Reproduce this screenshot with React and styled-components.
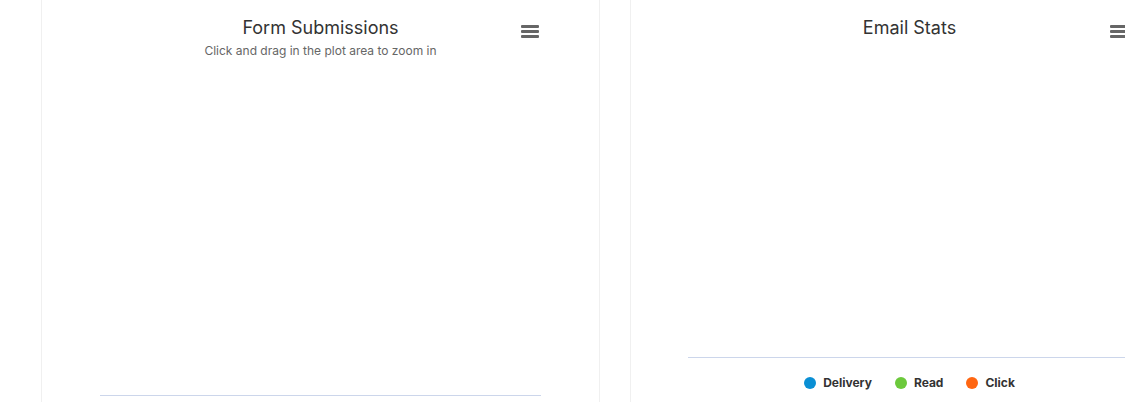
import styled, { createGlobalStyle } from "styled-components";

const GlobalStyle = createGlobalStyle`
  html, body {
    margin: 0;
    padding: 0;
    background: #ffffff;
    font-family: Inter, "Noto Sans", sans-serif;
    overflow: hidden;
  }
`;

const Page = styled.div`
  display: flex;
  gap: 30px;
  padding-left: 41px;
  height: 402px;
  overflow: hidden;
`;

const Card = styled.section`
  position: relative;
  flex: 0 0 559px;
  box-sizing: border-box;
  border-left: 1px solid #f0f0f0;
  border-right: 1px solid #f0f0f0;
  height: 440px;
  display: flex;
  flex-direction: column;
  align-items: center;
`;

const Title = styled.h2`
  margin: 16px 0 0;
  font-size: 18px;
  line-height: 24px;
  font-weight: 400;
  color: #333333;
`;

const Subtitle = styled.p`
  margin: 3px 0 0;
  font-size: 12px;
  line-height: 16px;
  color: #666666;
`;

const Plot = styled.div`
  align-self: stretch;
  margin: 0 ${({ $inset }) => $inset}px;
  height: ${({ $height }) => $height}px;
  border-bottom: 1px solid #ccd6eb;
`;

const MenuButton = styled.button`
  position: absolute;
  top: 25px;
  left: 479px;
  padding: 0;
  border: 0;
  background: none;
  cursor: pointer;
  display: flex;
`;

const Legend = styled.ul`
  list-style: none;
  margin: 17px 0 0;
  padding: 0;
  display: flex;
  gap: 23px;
`;

const LegendItem = styled.li`
  display: flex;
  align-items: center;
  gap: 7px;
  font-size: 12px;
  line-height: 16px;
  font-weight: 700;
  color: #333333;
`;

const Dot = styled.span`
  width: 12px;
  height: 12px;
  border-radius: 50%;
  background: ${({ $color }) => $color};
`;

function Hamburger() {
  return (
    <MenuButton aria-label="Chart menu">
      <svg width="18" height="14" viewBox="0 0 18 14">
        <g fill="#666666">
          <rect x="0" y="0" width="18" height="3" rx="1" />
          <rect x="0" y="5" width="18" height="3" rx="1" />
          <rect x="0" y="10" width="18" height="3" rx="1" />
        </g>
      </svg>
    </MenuButton>
  );
}

const series = [
  { name: "Delivery", color: "#0a8fd4" },
  { name: "Read", color: "#6cc93c" },
  { name: "Click", color: "#ff6611" },
];

export default function App() {
  return (
    <>
      <GlobalStyle />
      <Page>
        <Card>
          <Title>Form Submissions</Title>
          <Subtitle>Click and drag in the plot area to zoom in</Subtitle>
          <Plot $inset={58} $height={336} />
          <Hamburger />
        </Card>
        <Card>
          <Title>Email Stats</Title>
          <Plot $inset={57} $height={317} />
          <Legend>
            {series.map((s) => (
              <LegendItem key={s.name}>
                <Dot $color={s.color} />
                {s.name}
              </LegendItem>
            ))}
          </Legend>
          <Hamburger />
        </Card>
      </Page>
    </>
  );
}
